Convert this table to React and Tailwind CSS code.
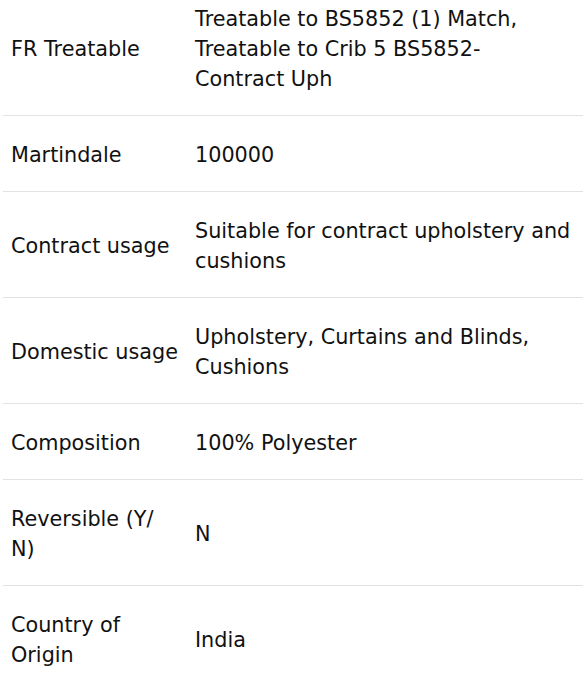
const ROWS = [
  ['FR Treatable', 'Treatable to BS5852 (1) Match, Treatable to Crib 5 BS5852- Contract Uph'],
  ['Martindale', '100000'],
  ['Contract usage', 'Suitable for contract upholstery and cushions'],
  ['Domestic usage', 'Upholstery, Curtains and Blinds, Cushions'],
  ['Composition', '100% Polyester'],
  [<>Reversible (Y/<br />N)</>, 'N'],
  ['Country of Origin', 'India'],
];

export default function App() {
  return (
    <div className="h-[675px] overflow-hidden bg-white px-[3px] font-['DejaVu_Sans',sans-serif] text-[20.75px] leading-[30px] text-[#111]">
      <table className="-mt-[20px] w-[580px] border-collapse">
        <tbody>
          {ROWS.map(([label, value], i) => (
            <tr key={i} className="border-b border-[#e2e2e2]">
              <td className="w-[184px] px-2 pt-[24px] pb-[21px] align-middle">{label}</td>
              <td className="px-2 pt-[24px] pb-[21px] align-middle">{value}</td>
            </tr>
          ))}
        </tbody>
      </table>
    </div>
  );
}
